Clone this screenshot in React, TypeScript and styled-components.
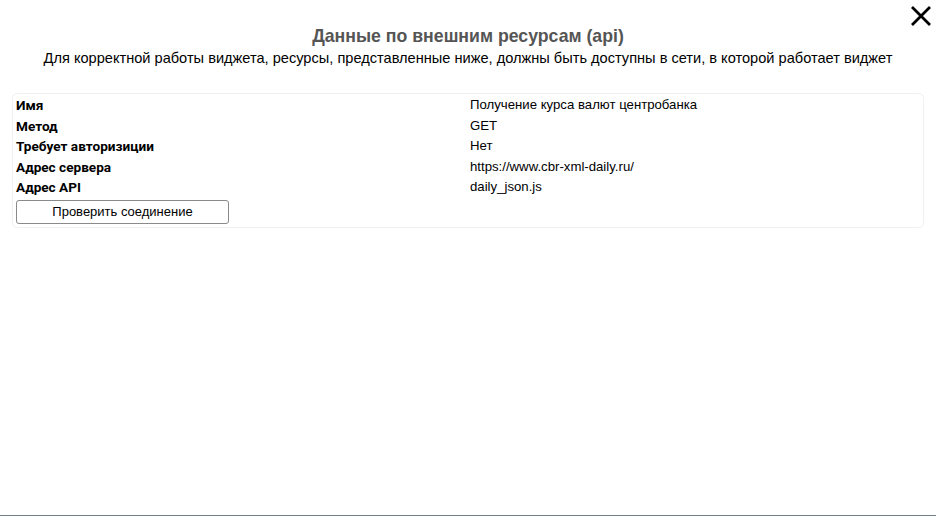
import React from "react";
import styled, { createGlobalStyle } from "styled-components";

const Global = createGlobalStyle`
  html, body { margin: 0; padding: 0; background: #fff; }
  body { font-family: "Liberation Sans", Arial, sans-serif; }
`;

const Page = styled.div`
  position: relative;
  height: 516px;
  box-sizing: border-box;
  border-bottom: 1px solid #6f7f8c;
  display: flex;
  flex-direction: column;
  overflow: hidden;
`;

const Header = styled.header`
  display: flex;
  flex-direction: column;
  align-items: center;
  padding-top: 26px;
`;

const Title = styled.h1`
  margin: 0;
  font-size: 17.7px;
  line-height: 21px;
  font-weight: bold;
  color: #555;
`;

const Subtitle = styled.p`
  margin: 1px 0 0 0;
  font-size: 14.6px;
  line-height: 20px;
  color: #000;
`;

const Close = styled.button`
  position: absolute;
  top: 5px;
  right: 4px;
  width: 22px;
  height: 22px;
  padding: 0;
  border: none;
  background: transparent;
  cursor: pointer;
`;

const Card = styled.section`
  margin: 25px 12px 0 12px;
  border: 1px solid #f0f0f0;
  border-radius: 5px;
  padding: 1px 3px 3px 3px;
`;

const Grid = styled.div`
  display: grid;
  grid-template-columns: 454px 1fr;
`;

const Label = styled.div`
  font-family: Roboto, "Liberation Sans", Arial, sans-serif;
  font-size: 13.6px;
  line-height: 20.6px;
  font-weight: bold;
  color: #000;
`;

const Value = styled.div`
  font-size: 13.2px;
  line-height: 20.6px;
  color: #000;
`;

const CheckButton = styled.button`
  margin-top: 2px;
  width: 213px;
  height: 24px;
  background: #fff;
  border: 1px solid #8a8a8a;
  border-radius: 3px;
  font-family: "Liberation Sans", Arial, sans-serif;
  font-size: 13px;
  color: #000;
  padding: 0;
`;

const rows: [string, string][] = [
  ["Имя", "Получение курса валют центробанка"],
  ["Метод", "GET"],
  ["Требует авторизиции", "Нет"],
  ["Адрес сервера", "https://www.cbr-xml-daily.ru/"],
  ["Адрес API", "daily_json.js"],
];

export default function App() {
  return (
    <>
      <Global />
      <Page>
        <Close aria-label="Закрыть">
          <svg width="22" height="22" viewBox="0 0 22 22">
            <path d="M2 2 L20 20 M20 2 L2 20" stroke="#000" strokeWidth="2.8" />
          </svg>
        </Close>
        <Header>
          <Title>Данные по внешним ресурсам (api)</Title>
          <Subtitle>
            Для корректной работы виджета, ресурсы, представленные ниже, должны быть доступны в сети, в которой работает виджет
          </Subtitle>
        </Header>
        <Card>
          <Grid>
            {rows.map(([l, v]) => (
              <React.Fragment key={l}>
                <Label>{l}</Label>
                <Value>{v}</Value>
              </React.Fragment>
            ))}
          </Grid>
          <CheckButton>Проверить соединение</CheckButton>
        </Card>
      </Page>
    </>
  );
}
